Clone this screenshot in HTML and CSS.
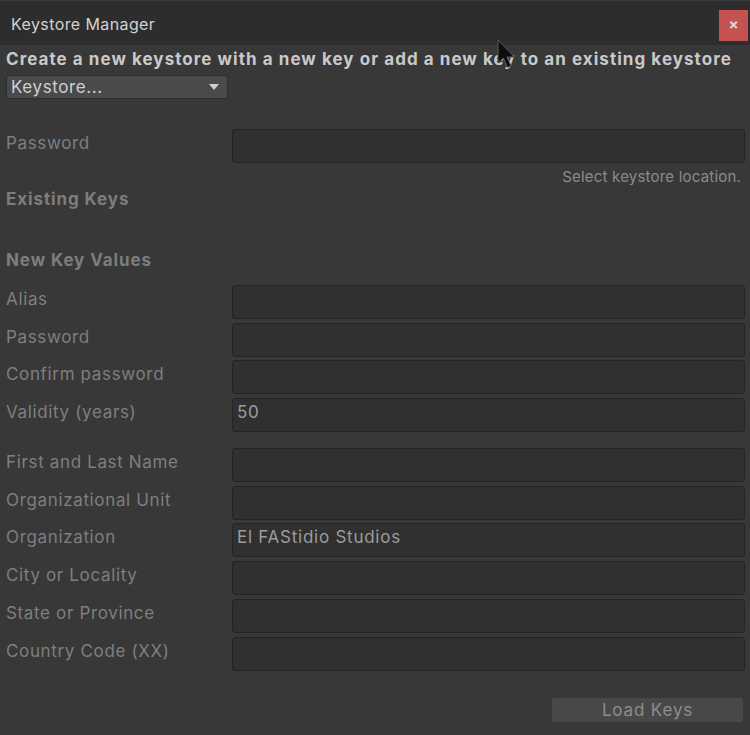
FILE: index.html
```html
<!DOCTYPE html>
<html>
<head>
<meta charset="utf-8">
<link rel="stylesheet" href="styles.css">
</head>
<body>
<div class="window">
  <div class="titlebar">
    <span class="title">Keystore Manager</span>
    <div class="close">×</div>
  </div>
  <div class="content">
    <div class="intro">Create a new keystore with a new key or add a new key to an existing keystore</div>
    <div class="dropdown"><span>Keystore...</span><span class="caret"></span></div>

    <div class="row first-pw">
      <div class="label">Password</div>
      <div class="field"></div>
    </div>
    <div class="hint">Select keystore location.</div>

    <div class="section existing">Existing Keys</div>
    <div class="section newkey">New Key Values</div>

    <div class="group">
      <div class="row"><div class="label">Alias</div><div class="field"></div></div>
      <div class="row"><div class="label">Password</div><div class="field"></div></div>
      <div class="row"><div class="label">Confirm password</div><div class="field"></div></div>
      <div class="row"><div class="label">Validity (years)</div><div class="field">50</div></div>
    </div>

    <div class="group second">
      <div class="row"><div class="label">First and Last Name</div><div class="field"></div></div>
      <div class="row"><div class="label">Organizational Unit</div><div class="field"></div></div>
      <div class="row"><div class="label">Organization</div><div class="field">El FAStidio Studios</div></div>
      <div class="row"><div class="label">City or Locality</div><div class="field"></div></div>
      <div class="row"><div class="label">State or Province</div><div class="field"></div></div>
      <div class="row"><div class="label">Country Code (XX)</div><div class="field"></div></div>
    </div>

    <div class="actions"><div class="button">Load Keys</div></div>
  </div>
  <svg class="cursor" width="20" height="31" viewBox="0 0 20 31">
    <path d="M1 1 L1 24 L6.5 19 L10.5 28.5 L14 27 L10 18 L17.5 18 Z" fill="#0e0e0e" stroke="#5a5a5a" stroke-width="1" stroke-linejoin="round"/>
  </svg>
</div>
</body>
</html>
```
FILE: styles.css
```css
html, body {
  margin: 0;
  padding: 0;
  background: #383838;
}
body {
  font-family: Inter, "Noto Sans", sans-serif;
  width: 750px;
  height: 735px;
  overflow: hidden;
}
.window {
  position: relative;
  width: 750px;
  height: 735px;
  background: #383838;
}
.titlebar {
  height: 45px;
  background: #2d2d2d;
  border-top: 1px solid #3a3a3a;
  box-sizing: border-box;
  display: flex;
  align-items: flex-start;
  padding-left: 11px;
}
.title {
  color: #d2d2d2;
  font-size: 16px;
  line-height: 16px;
  margin-top: 15px;
  letter-spacing: 0.4px;
}
.close {
  margin-left: auto;
  margin-top: 9px;
  margin-right: 2px;
  width: 29px;
  height: 31px;
  background: #c45252;
  color: #e0d2d2;
  font-size: 15px;
  font-weight: 700;
  line-height: 30px;
  text-align: center;
}
.content {
  padding: 0 5px 0 6px;
}
.intro {
  color: #c9c9c9;
  font-weight: 700;
  font-size: 17px;
  line-height: 24px;
  margin-top: 2px;
  white-space: nowrap;
  letter-spacing: 1.05px;
}
.dropdown {
  width: 222px;
  height: 24px;
  box-sizing: border-box;
  background: #4a4a4a;
  border: 1px solid #2e2e2e;
  border-radius: 3px;
  display: flex;
  align-items: center;
  justify-content: space-between;
  padding: 0 8px 0 4px;
  color: #cfcfcf;
  font-size: 17px;
  letter-spacing: 0.6px;
  margin-top: 4px;
}
.caret {
  width: 0;
  height: 0;
  border-left: 5px solid transparent;
  border-right: 5px solid transparent;
  border-top: 6px solid #cfcfcf;
}
.row {
  display: grid;
  grid-template-columns: 226px 1fr;
  align-items: center;
  height: 34px;
}
.first-pw {
  margin-top: 30px;
}
.label {
  color: #7f7f7f;
  font-size: 17px;
  letter-spacing: 0.65px;
  white-space: nowrap;
  padding-bottom: 6px;
}
.field {
  height: 34px;
  box-sizing: border-box;
  background: #303030;
  border: 1px solid #242424;
  border-radius: 3px;
  color: #9c9c9c;
  font-size: 17px;
  line-height: 26px;
  letter-spacing: 0.75px;
  padding-left: 4px;
}
.hint {
  text-align: right;
  color: #8b8b8b;
  font-size: 15px;
  line-height: 20px;
  margin-top: 4px;
  padding-right: 4px;
  letter-spacing: 0.2px;
}
.section {
  color: #7d7d7d;
  font-weight: 700;
  font-size: 17px;
  line-height: 24px;
  letter-spacing: 0.9px;
}
.existing {
  margin-top: 0;
}
.newkey {
  margin-top: 37px;
}
.group {
  display: flex;
  flex-direction: column;
  gap: 3.7px;
  margin-top: 13px;
}
.group.second {
  margin-top: 16px;
}
.actions {
  display: flex;
  justify-content: flex-end;
  margin-top: 27px;
}
.button {
  width: 191px;
  height: 24px;
  background: #484848;
  color: #8d8d8d;
  font-size: 17px;
  line-height: 24px;
  text-align: center;
  border-radius: 2px;
  margin-right: 2px;
  letter-spacing: 0.85px;
}
.cursor {
  position: absolute;
  left: 497px;
  top: 39px;
}
```
